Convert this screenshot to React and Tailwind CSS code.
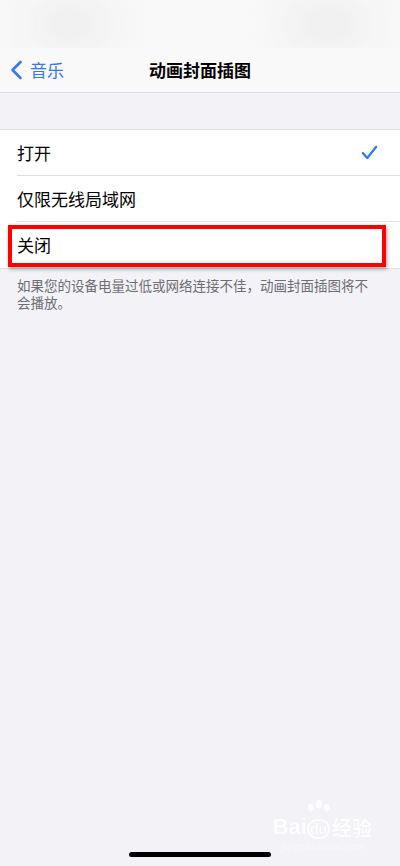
import React from "react";

const cjk = { fontFamily: '"Noto Sans CJK SC", "Noto Sans", sans-serif' };

function BackChevron() {
  return (
    <svg width="13" height="20" viewBox="0 0 13 20" fill="none">
      <path d="M10.5 2 L2.5 10 L10.5 18" stroke="#3478f6" strokeWidth="2.6" strokeLinecap="round" strokeLinejoin="round" />
    </svg>
  );
}

function Check() {
  return (
    <svg width="17" height="15" viewBox="0 0 17 15" fill="none">
      <path d="M1.8 8 L6.2 13 L15.2 1.8" stroke="#3478f6" strokeWidth="2.3" strokeLinecap="round" strokeLinejoin="round" />
    </svg>
  );
}

function OptionRow({ label, checked, last, highlight }) {
  return (
    <div className="relative flex h-[46px] items-center pl-[17px]">
      <div className={`flex h-full flex-1 items-center pr-[22px] ${last ? "" : "border-b border-[#e0e0e4]"}`}>
        <span className="flex-1 text-[17px] text-black">{label}</span>
        {checked && <Check />}
      </div>
      {highlight && (
        <div className="absolute left-[8px] right-[14px] top-[3px] bottom-[1px] border-4 border-[#ff0000] shadow-[1px_2px_4px_rgba(0,0,0,0.35)]" />
      )}
    </div>
  );
}

function Watermark() {
  return (
    <div className="absolute bottom-[14px] right-[28px] flex flex-col items-center text-white opacity-90 [text-shadow:0_0_1px_rgba(0,0,0,0.08)]">
      <div className="flex items-end text-[22px] font-bold leading-none" style={{ fontFamily: '"Liberation Sans", sans-serif' }}>
        <span>Bai</span>
        <span className="relative">
          <span className="absolute -top-[16px] left-[1px] flex items-end gap-[2px]">
            <span className="h-[7px] w-[6px] rounded-full bg-white" />
            <span className="mb-[3px] h-[8px] w-[6px] rounded-full bg-white" />
            <span className="h-[7px] w-[6px] rounded-full bg-white" />
          </span>
          <span className="rounded-full border-2 border-white px-[1px] text-[14px]">du</span>
        </span>
        <span className="ml-[2px] text-[20px]" style={cjk}>经验</span>
      </div>
      <div className="mt-[3px] text-[11px] leading-none" style={{ fontFamily: '"Liberation Serif", serif' }}>
        jingyan.baidu.com
      </div>
    </div>
  );
}

export default function App() {
  return (
    <div className="relative flex h-[866px] w-[400px] flex-col overflow-hidden bg-[#f2f2f7]" style={cjk}>
      {/* status bar, blurred */}
      <div className="relative flex h-[48px] justify-between overflow-hidden bg-[#f9f9f9] px-[30px]">
        <div className="mt-[8px] h-[32px] w-[80px] rounded-full bg-[#e6e6e6] blur-xl" />
        <div className="mt-[8px] h-[32px] w-[85px] rounded-full bg-[#e6e6e6] blur-xl" />
      </div>

      {/* navigation bar */}
      <div className="relative flex h-[45px] items-center border-b border-[#dcdce0] bg-[#f9f9f9]">
        <div className="flex items-center gap-[7px] pl-[10px] text-[17px] text-[#3478f6]">
          <BackChevron />
          <span>音乐</span>
        </div>
        <div className="absolute inset-x-0 text-center text-[17px] font-semibold text-black">动画封面插图</div>
      </div>

      <div className="h-[36px]" />

      <div className="border-y border-[#e0e0e4] bg-white">
        <OptionRow label="打开" checked />
        <OptionRow label="仅限无线局域网" />
        <OptionRow label="关闭" last highlight />
      </div>

      <p className="pl-[17px] pr-[26px] pt-[8px] text-[13.5px] leading-[17px] text-[#6d6d72]">
        如果您的设备电量过低或网络连接不佳，动画封面插图将不会播放。
      </p>

      <div className="flex-1" />

      <div className="flex justify-center pb-[9px]">
        <div className="h-[5px] w-[142px] rounded-full bg-black" />
      </div>

      <Watermark />
    </div>
  );
}
